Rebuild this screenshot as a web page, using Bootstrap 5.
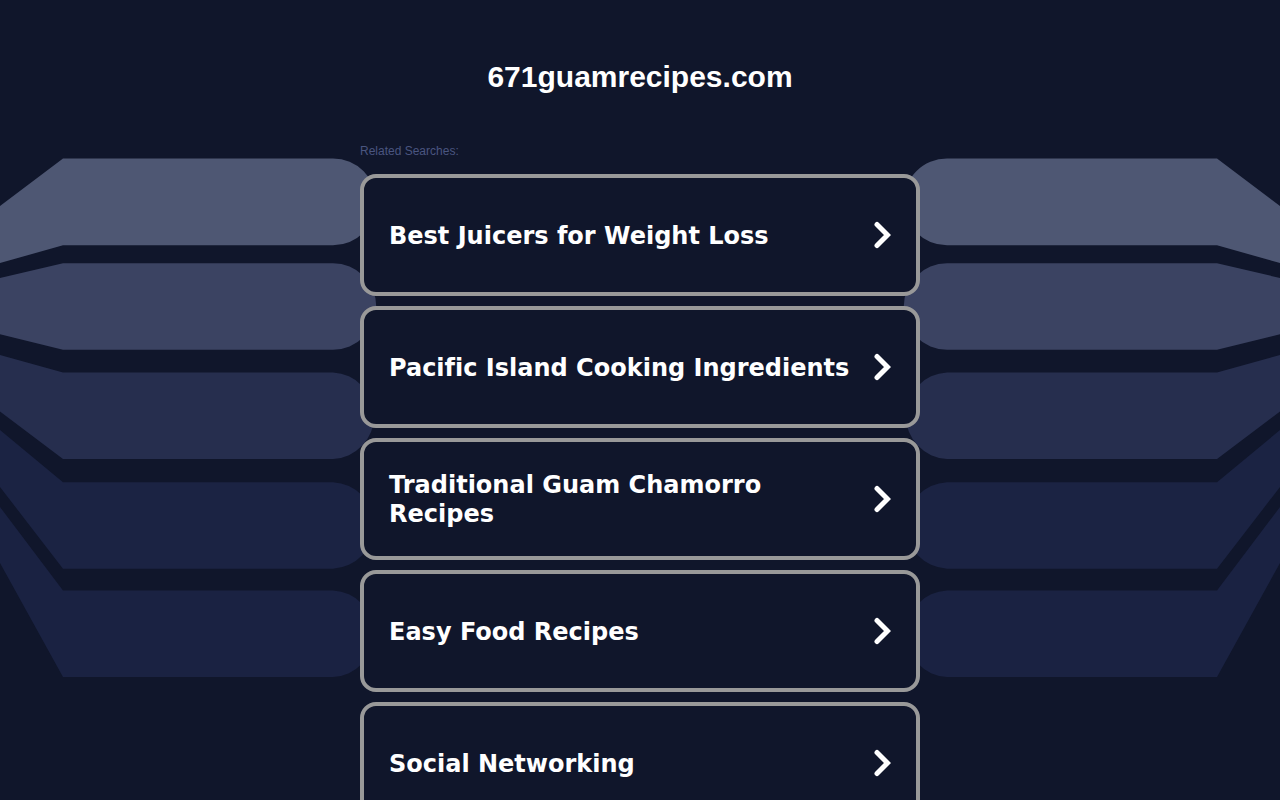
<!DOCTYPE html>
<html lang="en">
<head>
<meta charset="utf-8">
<meta name="viewport" content="width=device-width, initial-scale=1">
<title>671guamrecipes.com</title>
<link href="https://cdn.jsdelivr.net/npm/bootstrap@5.3.0/dist/css/bootstrap.min.css" rel="stylesheet">
<style>
  body { background: #10162b; color: #fff; font-family: "Liberation Sans", Arial, sans-serif; }
  .backdrop { z-index: -1; }
  .site-title { font-size: 30px; line-height: 36px; padding: 59px 0 47px; }
  .results { max-width: 560px; }
  .results-label { font-size: 12px; line-height: 18px; color: #4a5580; margin-bottom: 14px; }
  .results-list { gap: 10px; }
  .result-link {
    min-height: 122px; padding: 20px 25px; gap: 16px;
    border: 4px solid #999; border-radius: 16px; background: #10162b;
    font-family: "DejaVu Sans", Verdana, sans-serif; font-size: 24px; line-height: 29px;
    font-variant-ligatures: none;
  }
  .result-link span { padding-top: 2px; }
  .result-link:hover { background: #1a2342; }
</style>
</head>
<body>
<div class="position-relative overflow-hidden">
  <svg class="backdrop position-absolute top-0 start-0 w-100" viewBox="0 0 1280 700" aria-hidden="true">
    <defs>
      <g id="bands">
        <path fill="#4e5773" d="M0 206 63 158.5H333A43.3 43.3 0 0 1 333 245.3H63L0 263Z"/>
        <path fill="#3b4362" d="M0 278 63 263.2H333A43.3 43.3 0 0 1 333 349.8H63L0 334.3Z"/>
        <path fill="#262e4e" d="M0 355 63 372.5H333A43.3 43.3 0 0 1 333 459H63L0 411.5Z"/>
        <path fill="#1b2343" d="M0 430 63 482.2H333A43.3 43.3 0 0 1 333 568.7H63L0 487Z"/>
        <path fill="#1a2242" d="M0 507 63 590.5H333A43.3 43.3 0 0 1 333 677H63L0 563Z"/>
      </g>
    </defs>
    <use href="#bands"/>
    <use href="#bands" transform="translate(1280 0) scale(-1 1)"/>
  </svg>
  <svg class="d-none" aria-hidden="true">
    <symbol id="chevron" viewBox="0 0 18 28">
      <path d="M4 3.500 14.500 14 4 24.500" fill="none" stroke="#fff" stroke-width="5" stroke-linecap="round"/>
    </symbol>
  </svg>
  <header>
    <h1 class="site-title fw-bold text-center m-0">671guamrecipes.com</h1>
  </header>
  <main class="results mx-auto pb-4">
    <p class="results-label">Related Searches:</p>
    <nav class="results-list d-flex flex-column" aria-label="Related Searches">
      <a class="result-link d-flex align-items-center justify-content-between fw-bold text-white text-decoration-none" href="#"><span>Best Juicers for Weight Loss</span><svg class="flex-shrink-0" width="18" height="28" aria-hidden="true"><use href="#chevron"/></svg></a>
      <a class="result-link d-flex align-items-center justify-content-between fw-bold text-white text-decoration-none" href="#"><span>Pacific Island Cooking Ingredients</span><svg class="flex-shrink-0" width="18" height="28" aria-hidden="true"><use href="#chevron"/></svg></a>
      <a class="result-link d-flex align-items-center justify-content-between fw-bold text-white text-decoration-none" href="#"><span>Traditional Guam Chamorro Recipes</span><svg class="flex-shrink-0" width="18" height="28" aria-hidden="true"><use href="#chevron"/></svg></a>
      <a class="result-link d-flex align-items-center justify-content-between fw-bold text-white text-decoration-none" href="#"><span>Easy Food Recipes</span><svg class="flex-shrink-0" width="18" height="28" aria-hidden="true"><use href="#chevron"/></svg></a>
      <a class="result-link d-flex align-items-center justify-content-between fw-bold text-white text-decoration-none" href="#"><span>Social Networking</span><svg class="flex-shrink-0" width="18" height="28" aria-hidden="true"><use href="#chevron"/></svg></a>
    </nav>
  </main>
</div>
<script src="https://cdn.jsdelivr.net/npm/bootstrap@5.3.0/dist/js/bootstrap.bundle.min.js"></script>
</body>
</html>
